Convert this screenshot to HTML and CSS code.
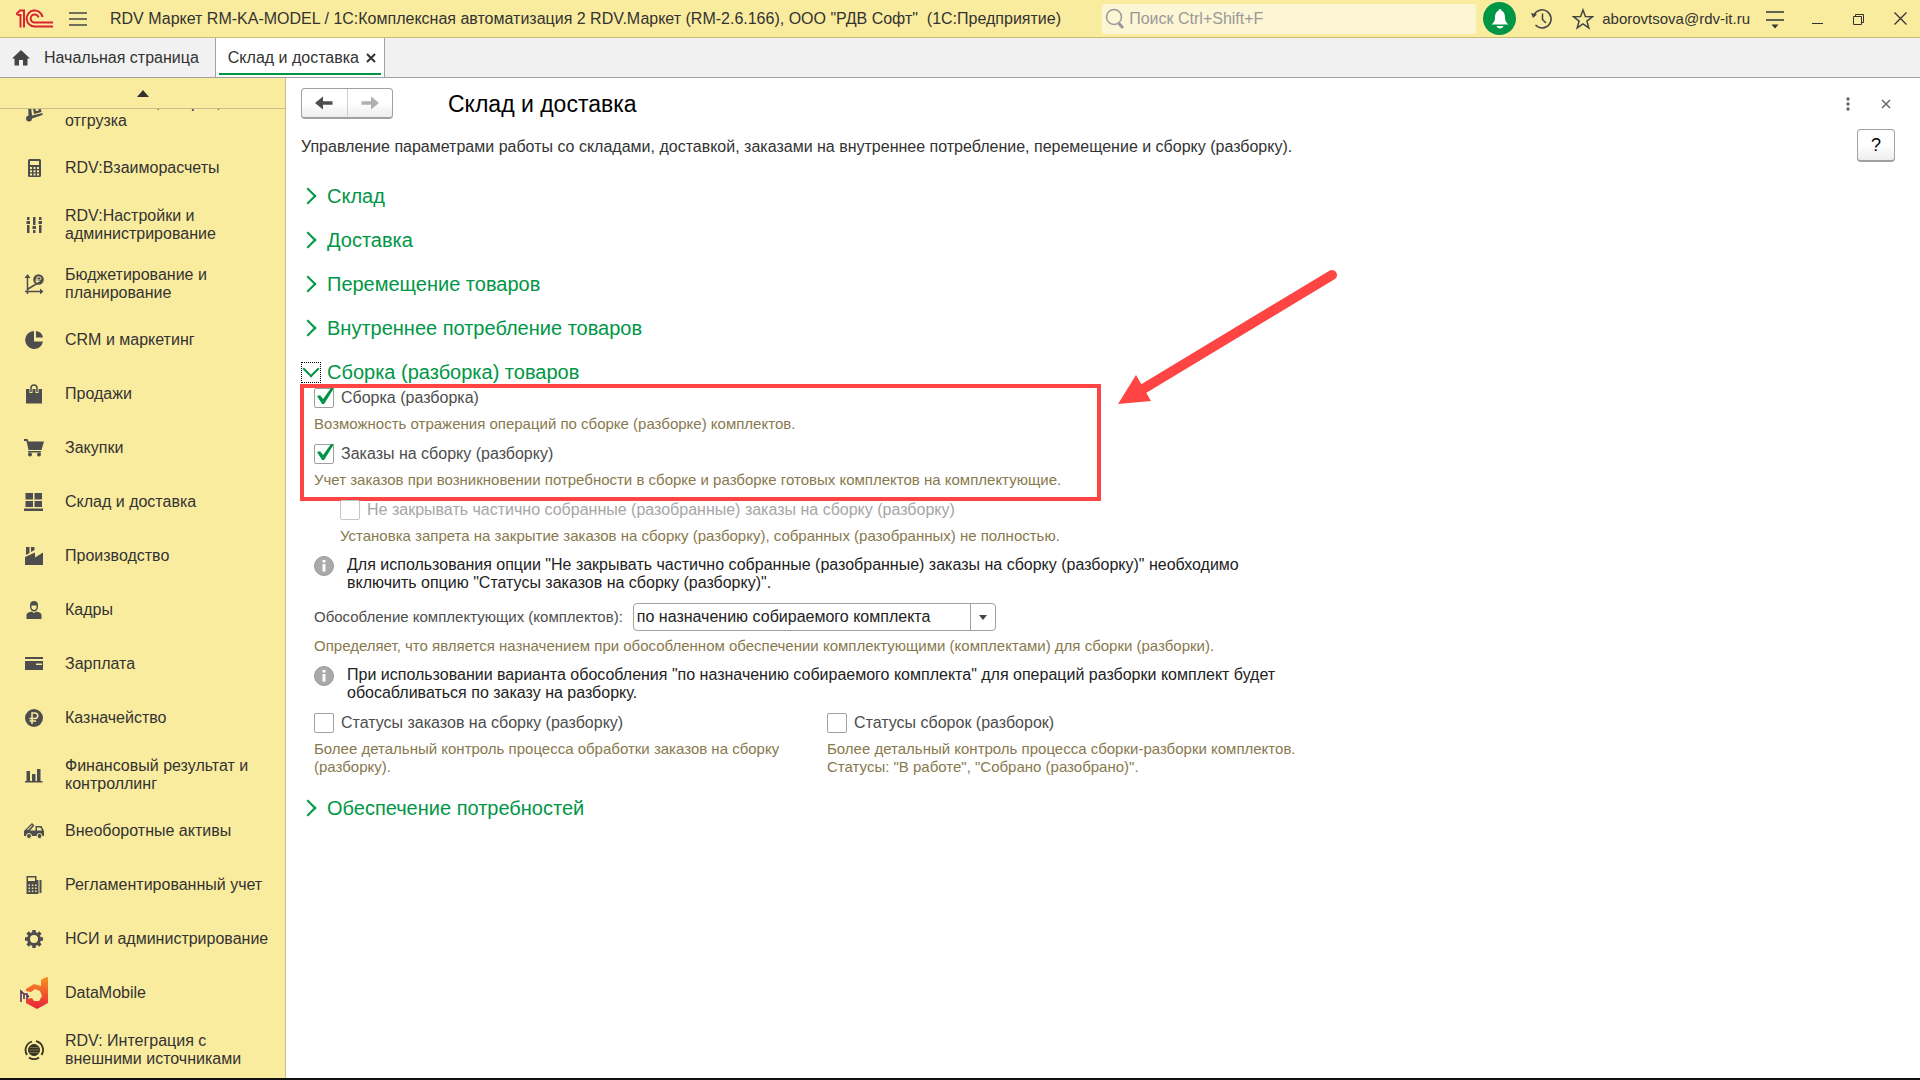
FILE: index.html
```html
<!DOCTYPE html>
<html lang="ru">

<head>
  <meta charset="UTF-8" />
  <meta name="viewport" content="width=device-width, initial-scale=1.0" />
  <title>Склад и доставка</title>
  <link rel="stylesheet" href="styles.css">
</head>

<body>
  <!-- Заголовок окна -->
  <header class="titlebar">
    <svg class="logo" width="38" height="20" viewBox="0 0 38 20" fill="none" stroke="#d9232e" stroke-width="2" aria-label="1С">
      <path d="M0 5.500L4 1.500H8V18.500M4.500 18.500V6H1.500" />
      <path d="M26.500 8A8 8 0 1 0 19 17.500H37" />
      <path d="M22.500 8.500A4 4 0 1 0 19 13.500H37" />
    </svg>
    <button class="icon-button menu-button" type="button" aria-label="Меню">
      <svg width="18" height="16" viewBox="0 0 18 16" stroke="#444" stroke-width="1.500"><path d="M0 2H18M0 8H18M0 14H18" /></svg>
    </button>
    <div class="app-title">RDV Маркет RM-KA-MODEL / 1С:Комплексная автоматизация 2 RDV.Маркет (RM-2.6.166), ООО "РДВ Софт"&nbsp; (1С:Предприятие)</div>
    <div class="search">
      <svg width="20" height="22" viewBox="0 0 20 22" fill="none" stroke="#999"><circle cx="9" cy="9" r="7.500" stroke-width="1.500" /><path d="M13.500 15L18 20" stroke-width="3" /></svg>
      <input type="search" placeholder="Поиск Ctrl+Shift+F" aria-label="Поиск" />
    </div>
    <button class="bell" type="button" aria-label="Оповещения">
      <svg width="20" height="22" viewBox="0 0 20 22" fill="#fff"><path d="M10 1C11 1 11.500 2 11.500 2.800C14.500 4 15 7 15 10C15 13 16.500 15 18.500 16.500H1.500C3.500 15 5 13 5 10C5 7 5.500 4 8.500 2.800C8.500 2 9 1 10 1ZM6.500 18H13.500C13 19.500 11.500 20.500 10 20.500S7 19.500 6.500 18Z" /></svg>
    </button>
    <button class="icon-button history" type="button" aria-label="История">
      <svg width="22" height="22" viewBox="0 0 22 22" fill="none" stroke="#444" stroke-width="1.500"><path d="M3 7A9 9 0 1 1 4.500 17M11.500 5.500V11.500L15 15" /><path d="M0 5L6 6.500L2 10Z" fill="#444" stroke="none" /></svg>
    </button>
    <button class="icon-button favorites" type="button" aria-label="Избранное">
      <svg width="22" height="22" viewBox="0 0 22 22" fill="none" stroke="#444" stroke-width="1.500"><path d="M11 2L13.400 8.600L20.400 8.800L14.900 13.100L16.800 19.900L11 15.900L5.200 19.900L7.100 13.100L1.600 8.800L8.600 8.600Z" /></svg>
    </button>
    <a class="user" href="#">aborovtsova@rdv-it.ru</a>
    <button class="icon-button" type="button" aria-label="Сервис и настройки">
      <svg width="18" height="20" viewBox="0 0 18 20" stroke="#333" stroke-width="1.500"><path d="M0 3H18M0 11H18" /><path d="M5.500 15.500H12.500L9 19.500Z" fill="#333" stroke="none" /></svg>
    </button>
    <div class="window-buttons">
      <button class="icon-button" type="button" aria-label="Свернуть">
        <svg width="12" height="12" viewBox="0 0 12 12" stroke="#333"><path d="M0 10.500H11" /></svg>
      </button>
      <button class="icon-button" type="button" aria-label="Развернуть">
        <svg width="12" height="12" viewBox="0 0 12 12" fill="none" stroke="#333"><path d="M0.500 3.500H8.500V11.500H0.500ZM2.500 3.500V1.500H10.500V9.500H8.500" /></svg>
      </button>
      <button class="icon-button" type="button" aria-label="Закрыть окно">
        <svg width="13" height="13" viewBox="0 0 13 13" stroke="#333" stroke-width="1.300"><path d="M0.500 0.500L12.500 12.500M12.500 0.500L0.500 12.500" /></svg>
      </button>
    </div>
  </header>

  <!-- Вкладки -->
  <nav class="tabs" aria-label="Открытые вкладки">
    <a class="tab" href="#">
      <svg width="18" height="16" viewBox="0 0 18 16" fill="#444"><path d="M9 0L18 8.500H15.500V15.500H11V10H7V15.500H2.500V8.500H0Z" /></svg>
      <span>Начальная страница</span>
    </a>
    <div class="tab active">
      <span>Склад и доставка</span>
      <button class="icon-button" type="button" aria-label="Закрыть вкладку">
        <svg width="10" height="10" viewBox="0 0 10 10" stroke="#333" stroke-width="2"><path d="M1 1L9 9M9 1L1 9" /></svg>
      </button>
    </div>
  </nav>

  <div class="workspace">
    <!-- Панель разделов -->
    <aside class="sidebar">
      <button class="scroll-up" type="button" aria-label="Прокрутить вверх">
        <svg width="12" height="7" viewBox="0 0 12 7" fill="#333"><path d="M6 0L12 7H0Z" /></svg>
      </button>
      <div class="section-viewport">
        <ul class="sections">
          <li><a class="section two-lines" href="#">
            <svg width="20" height="20" viewBox="0 0 20 20" fill="#4d4d4d"><path d="M4 0H6.500L8 13.500L18.500 11V13L8 16.500A3 3 0 1 1 4.500 13.500ZM8.500 3L15.500 1.500L17.500 10L10 12Z" /><path d="M11 6L14 5.200L15 8.300L12 9.200Z" fill="#faec9e" /></svg>
            <span>RDV:Заказы, сборка,<br>отгрузка</span></a></li>
          <li><a class="section" href="#">
            <svg width="20" height="20" viewBox="0 0 20 20" fill="#4d4d4d"><rect x="4" y="1" width="13" height="18" rx="1.500" /><path d="M6 3H15V7H6ZM6 9H8V11H6ZM9.500 9H11.500V11H9.500ZM13 9H15V11H13ZM6 12.200H8V14.200H6ZM9.500 12.200H11.500V14.200H9.500ZM13 12.200H15V14.200H13ZM6 15.500H8V17.500H6ZM9.500 15.500H11.500V17.500H9.500ZM13 15.500H15V17.500H13Z" fill="#faec9e" /></svg>
            <span>RDV:Взаиморасчеты</span></a></li>
          <li><a class="section two-lines" href="#">
            <svg width="20" height="20" viewBox="0 0 20 20" fill="#4d4d4d"><path d="M3 2H5.500V5H3ZM2.500 6H6V9H2.500ZM3 10H5.500V18H3ZM9 2H11.500V10H9ZM8.500 11H12V14H8.500ZM9 15H11.500V18H9ZM15 2H17.500V5H15ZM14.500 6H18V9H14.500ZM15 10H17.500V18H15Z" /></svg>
            <span>RDV:Настройки и администрирование</span></a></li>
          <li><a class="section two-lines" href="#">
            <svg width="20" height="20" viewBox="0 0 20 20" fill="none" stroke="#4d4d4d" stroke-width="1.500"><path d="M3.500 20V3M1 17.500H17M4 15L13 9.500" /><path d="M3.500 0L6.500 4H0.500ZM19.500 17.500L16 14.500V20.500Z" fill="#4d4d4d" stroke="none" /><circle cx="14.500" cy="5.500" r="5.300" fill="#4d4d4d" stroke="none" /><path d="M13 9V3H15.500A1.500 1.500 0 0 1 15.500 6H11.500M11.500 7.500H15.500" stroke="#faec9e" stroke-width="1" /></svg>
            <span>Бюджетирование и планирование</span></a></li>
          <li><a class="section" href="#">
            <svg width="20" height="20" viewBox="0 0 20 20" fill="#4d4d4d"><path d="M10 1A9 9 0 1 0 19 11.500H10ZM12 1V7.500H19A8 8 0 0 0 12 1Z" /></svg>
            <span>CRM и маркетинг</span></a></li>
          <li><a class="section" href="#">
            <svg width="20" height="20" viewBox="0 0 20 20" fill="#4d4d4d"><path d="M2 5H18V19.500H2Z" /><path d="M7 9V4A3 3 0 0 1 13 4V9" fill="none" stroke="#faec9e" stroke-width="3" /><path d="M7 8V4A3 3 0 0 1 13 4V8" fill="none" stroke="#4d4d4d" stroke-width="1.500" /></svg>
            <span>Продажи</span></a></li>
          <li><a class="section" href="#">
            <svg width="20" height="20" viewBox="0 0 20 20" fill="#4d4d4d"><path d="M0 1H3.500L4.500 3.500H20L17.500 12H4.500L2.500 3H0ZM4 13H17V14.500H4Z" /><circle cx="6" cy="16.500" r="2" /><circle cx="15" cy="16.500" r="2" /></svg>
            <span>Закупки</span></a></li>
          <li><a class="section" href="#">
            <svg width="20" height="20" viewBox="0 0 20 20" fill="#4d4d4d"><path d="M1.500 1H9V7.500H1.500ZM10.500 1H18V7.500H10.500ZM1.500 9H9V15H1.500ZM10.500 9H18V15H10.500ZM0 16.500H19V19H0Z" /></svg>
            <span>Склад и доставка</span></a></li>
          <li><a class="section" href="#">
            <svg width="20" height="20" viewBox="0 0 20 20" fill="#4d4d4d"><path d="M1 19V11L11 6.500V11.500L19 6.500V19ZM2 1H5.500V7L2 9ZM7 1H10.500V4L7 6Z" /></svg>
            <span>Производство</span></a></li>
          <li><a class="section" href="#">
            <svg width="20" height="20" viewBox="0 0 20 20" fill="#4d4d4d"><path d="M6 5C6 2.500 7.500 1 10 1S14 2.500 14 5V7C14 9.500 12 11.500 10 11.500S6 9.500 6 7ZM2.500 19V15C2.500 12.500 6 12 7.500 11.500L10 13L12.500 11.500C14 12 17.500 12.500 17.500 15V19Z" /><path d="M7.500 5.500H12.500V7.500C12.500 9 11 10 10 10S7.500 9 7.500 7.500Z" fill="#faec9e" /></svg>
            <span>Кадры</span></a></li>
          <li><a class="section" href="#">
            <svg width="20" height="20" viewBox="0 0 20 20" fill="#4d4d4d"><path d="M1 3H19V5H1ZM1 7H19V16H1Z" /><path d="M12 9.500H18V11H12Z" fill="#faec9e" /></svg>
            <span>Зарплата</span></a></li>
          <li><a class="section" href="#">
            <svg width="20" height="20" viewBox="0 0 20 20"><circle cx="10" cy="10" r="9" fill="#4d4d4d" /><path d="M8 16V5H11.500A2.800 2.800 0 0 1 11.500 10.500H5.500M5.500 13H12" fill="none" stroke="#faec9e" stroke-width="1.500" /></svg>
            <span>Казначейство</span></a></li>
          <li><a class="section two-lines" href="#">
            <svg width="20" height="20" viewBox="0 0 20 20" fill="#4d4d4d"><path d="M2.500 6H6V16H2.500ZM8 9H11.500V16H8ZM13 4H16.500V16H13ZM1 16H18.500V17.500H1Z" /></svg>
            <span>Финансовый результат и контроллинг</span></a></li>
          <li><a class="section" href="#">
            <svg width="20" height="20" viewBox="0 0 20 20" fill="#4d4d4d"><path d="M0 10L8 2L10.500 4.500L6 9.500H11.500V5H17.500L20 10V15H0Z" /><path d="M13 6.500H16.500L18 9.500H13ZM3 8.500L8 4L8.500 4.500L4 9Z" fill="#faec9e" /><g stroke="#faec9e"><circle cx="5" cy="15" r="2.500" /><circle cx="15.500" cy="15" r="2.500" /></g></svg>
            <span>Внеоборотные активы</span></a></li>
          <li><a class="section" href="#">
            <svg width="20" height="20" viewBox="0 0 20 20" fill="#4d4d4d"><path d="M2.500 1H12.500V5H14.500V19H2.500V5ZM15.500 5H17.500V18H15.500Z" /><path d="M4 2.500H11V6H4ZM4.500 9.500H6V11H4.500ZM7.800 9.500H9.300V11H7.800ZM11 9.500H12.500V11H11ZM4.500 12.500H6V14H4.500ZM7.800 12.500H9.300V14H7.800ZM11 12.500H12.500V14H11ZM4.500 15.500H6V17H4.500ZM7.800 15.500H9.300V17H7.800ZM11 15.500H12.500V17H11Z" fill="#faec9e" /></svg>
            <span>Регламентированный учет</span></a></li>
          <li><a class="section" href="#">
            <svg width="20" height="20" viewBox="0 0 20 20" fill="none" stroke="#4d4d4d"><circle cx="10" cy="10" r="5.500" stroke-width="3" /><path d="M10 1V4M10 16V19M1 10H4M16 10H19M3.600 3.600L5.800 5.800M14.200 14.200L16.400 16.400M16.400 3.600L14.200 5.800M5.800 14.200L3.600 16.400" stroke-width="3.500" /></svg>
            <span>НСИ и администрирование</span></a></li>
          <li><a class="section" href="#">
            <svg width="28" height="32" viewBox="0 0 28 32">
              <defs><linearGradient id="dm" x1="0" y1="0" x2="0" y2="1"><stop offset="0" stop-color="#f7941e" /><stop offset="1" stop-color="#e8203a" /></linearGradient></defs>
              <path d="M21 9V3L24 1L28 0V26L17 32L6 26V22L12 21L14 24H19L22 19L20 14L15 12L11 15L6 14V12L14 7Z" fill="url(#dm)" />
              <path d="M1 25V14L4 17V22M4 17L7 17V22M7 18L9 20" fill="none" stroke="#4b2a63" stroke-width="1.500" />
            </svg>
            <span>DataMobile</span></a></li>
          <li><a class="section two-lines" href="#">
            <svg width="20" height="20" viewBox="0 0 20 20" fill="none" stroke="#35331f"><circle cx="10" cy="10" r="5.500" fill="#35331f" /><path d="M3 15A9 9 0 0 1 8 1.500M12 1.200A9 9 0 0 1 17.500 15M15 17.500A9 9 0 0 1 5 17.500" stroke-width="1.800" /><path d="M5 10H15M6 7.500H14M6 12.500H14" stroke="#8b845a" stroke-width="0.800" /></svg>
            <span>RDV: Интеграция с внешними источниками</span></a></li>
        </ul>
      </div>
    </aside>

    <!-- Форма настроек -->
    <main class="page">
      <div class="page-head">
        <div class="nav-buttons">
          <button type="button" aria-label="Назад">
            <svg width="18" height="14" viewBox="0 0 18 14" fill="#4d4d4d"><path d="M0 7L8 0.500V5.200H17.500V8.800H8V13.500Z" /></svg>
          </button>
          <button type="button" aria-label="Вперед" disabled>
            <svg width="18" height="14" viewBox="0 0 18 14" fill="#b0b0b0"><path d="M18 7L10 0.500V5.200H0.500V8.800H10V13.500Z" /></svg>
          </button>
        </div>
        <h1>Склад и доставка</h1>
        <button class="icon-button" type="button" aria-label="Еще">
          <svg width="4" height="14" viewBox="0 0 4 14" fill="#666"><circle cx="2" cy="2" r="1.700" /><circle cx="2" cy="7" r="1.700" /><circle cx="2" cy="12" r="1.700" /></svg>
        </button>
        <button class="icon-button close-page" type="button" aria-label="Закрыть">
          <svg width="10" height="10" viewBox="0 0 10 10" stroke="#666" stroke-width="1.500"><path d="M1 1L9 9M9 1L1 9" /></svg>
        </button>
      </div>

      <div class="intro">
        <p>Управление параметрами работы со складами, доставкой, заказами на внутреннее потребление, перемещение и сборку (разборку).</p>
        <button class="help" type="button" aria-label="Справка">?</button>
      </div>

      <div class="groups">
        <h2><button class="group" type="button" aria-expanded="false"><span class="chevron"></span>Склад</button></h2>
        <h2><button class="group" type="button" aria-expanded="false"><span class="chevron"></span>Доставка</button></h2>
        <h2><button class="group" type="button" aria-expanded="false"><span class="chevron"></span>Перемещение товаров</button></h2>
        <h2><button class="group" type="button" aria-expanded="false"><span class="chevron"></span>Внутреннее потребление товаров</button></h2>
        <section>
          <h2><button class="group" type="button" aria-expanded="true"><span class="chevron"></span>Сборка (разборка) товаров</button></h2>
          <div class="group-body">
            <div class="highlight">
              <div class="option">
                <label><input type="checkbox" checked /> Сборка (разборка)</label>
                <p class="hint">Возможность отражения операций по сборке (разборке) комплектов.</p>
              </div>
              <div class="option">
                <label><input type="checkbox" checked /> Заказы на сборку (разборку)</label>
                <p class="hint">Учет заказов при возникновении потребности в сборке и разборке готовых комплектов на комплектующие.</p>
              </div>
              <svg class="arrow" width="220" height="136" viewBox="0 0 220 136">
                <path d="M214 6L25 120" stroke="#ff4444" stroke-width="10" stroke-linecap="round" />
                <path d="M0 135L18 106L33 132Z" fill="#ff4444" />
              </svg>
            </div>
            <div class="option nested">
              <label class="disabled"><input type="checkbox" disabled /> Не закрывать частично собранные (разобранные) заказы на сборку (разборку)</label>
              <p class="hint">Установка запрета на закрытие заказов на сборку (разборку), собранных (разобранных) не полностью.</p>
            </div>
            <div class="info">
              <svg width="20" height="20" viewBox="0 0 20 20"><circle cx="10" cy="10" r="9.500" fill="#aaa" stroke="#999" /><path d="M8.500 4H11.500V6.500H8.500ZM8.500 8H11.500V15.500H8.500Z" fill="#fff" /></svg>
              <p>Для использования опции "Не закрывать частично собранные (разобранные) заказы на сборку (разборку)" необходимо включить опцию "Статусы заказов на сборку (разборку)".</p>
            </div>
            <div class="field">
              <div class="field-row">
                <label for="separation">Обособление комплектующих (комплектов):</label>
                <div class="select">
                  <select id="separation">
                    <option>по назначению собираемого комплекта</option>
                  </select>
                </div>
              </div>
              <p class="hint">Определяет, что является назначением при обособленном обеспечении комплектующими (комплектами) для сборки (разборки).</p>
            </div>
            <div class="info">
              <svg width="20" height="20" viewBox="0 0 20 20"><circle cx="10" cy="10" r="9.500" fill="#aaa" stroke="#999" /><path d="M8.500 4H11.500V6.500H8.500ZM8.500 8H11.500V15.500H8.500Z" fill="#fff" /></svg>
              <p>При использовании варианта обособления "по назначению собираемого комплекта" для операций разборки комплект будет обосабливаться по заказу на разборку.</p>
            </div>
            <div class="columns">
              <div class="option">
                <label><input type="checkbox" /> Статусы заказов на сборку (разборку)</label>
                <p class="hint">Более детальный контроль процесса обработки заказов на сборку (разборку).</p>
              </div>
              <div class="option">
                <label><input type="checkbox" /> Статусы сборок (разборок)</label>
                <p class="hint">Более детальный контроль процесса сборки-разборки комплектов. Статусы: "В работе", "Собрано (разобрано)".</p>
              </div>
            </div>
          </div>
        </section>
        <h2><button class="group" type="button" aria-expanded="false"><span class="chevron"></span>Обеспечение потребностей</button></h2>
      </div>
    </main>
  </div>
  <footer class="taskbar"></footer>
</body>

</html>
```

FILE: styles.css
```css
/* Общие стили */
* {
  box-sizing: border-box;
}

body {
  margin: 0;
  height: 100vh;
  display: flex;
  flex-direction: column;
  overflow: hidden;
  font-family: "Liberation Sans", Arial, sans-serif;
  font-size: 16px;
  line-height: 18px;
  color: #333;
  background-color: #fff;
}

h1,
h2,
p,
ul {
  margin: 0;
  padding: 0;
  font-weight: normal;
}

ul {
  list-style: none;
}

a {
  color: inherit;
  text-decoration: none;
}

button,
input,
select {
  font: inherit;
  color: inherit;
}

button {
  padding: 0;
  border: none;
  background: none;
  cursor: pointer;
}

svg {
  display: block;
  flex: none;
}

.icon-button {
  display: flex;
  flex: none;
}

/* Заголовок окна */
.titlebar {
  display: flex;
  align-items: center;
  height: 38px;
  flex: none;
  padding: 0 13px 0 16px;
  background-color: #faec9e;
  border-bottom: 1px solid #c9bc70;
}

.menu-button {
  margin: 0 23px 0 15px;
}

.app-title {
  flex: 1;
  white-space: nowrap;
  overflow: hidden;
}

.search {
  display: flex;
  align-items: center;
  gap: 4px;
  width: 374px;
  height: 30px;
  padding-left: 3px;
  border-radius: 3px;
  background-color: #fdf6d4;
}

.search input {
  flex: 1;
  min-width: 0;
  padding: 0;
  border: none;
  outline: none;
  background: none;
}

.search input::placeholder {
  color: #999;
}

.bell {
  display: flex;
  align-items: center;
  justify-content: center;
  width: 33px;
  height: 33px;
  margin-left: 7px;
  border-radius: 50%;
  background-color: #009646;
}

.history {
  margin-left: 15px;
}

.favorites {
  margin: 0 8px 0 19px;
}

.user {
  margin-right: 16px;
  font-size: 15px;
}

.window-buttons {
  display: flex;
  align-items: center;
  gap: 29px;
  margin-left: 28px;
}

/* Вкладки */
.tabs {
  display: flex;
  height: 40px;
  flex: none;
  background-color: #f1f1f1;
  border-bottom: 1px solid #a0a0a0;
}

.tab {
  display: flex;
  align-items: center;
  gap: 14px;
  padding: 0 16px 0 12px;
}

.tab.active {
  gap: 7px;
  padding: 0 8px 0 12px;
  background: linear-gradient(#009646, #009646) center bottom 2px / calc(100% - 6px) 2px no-repeat #fff;
  border-left: 1px solid #a0a0a0;
  border-right: 1px solid #a0a0a0;
}

/* Панель разделов */
.workspace {
  display: flex;
  flex: 1;
  min-height: 0;
}

.sidebar {
  display: flex;
  flex-direction: column;
  width: 286px;
  flex: none;
  background-color: #faec9e;
  border-right: 1px solid #c9bc8a;
}

.scroll-up {
  display: flex;
  align-items: center;
  justify-content: center;
  height: 31px;
  flex: none;
  border-bottom: 1px solid #c9bc8a;
}

.section-viewport {
  flex: 1;
  min-height: 0;
  overflow: hidden;
}

/* список прокручен на несколько пикселей вниз */
.sections {
  margin-top: -27px;
}

.section {
  display: grid;
  grid-template-columns: 36px 1fr;
  align-items: center;
  justify-items: center;
  gap: 13px;
  height: 54px;
  padding: 0 16px;
}

.section.two-lines {
  height: 59px;
}

.section span {
  justify-self: start;
}

/* Форма */
.page {
  flex: 1;
  padding: 10px 25px 0 15px;
}

.page-head {
  display: flex;
  align-items: center;
  height: 31px;
  margin-bottom: 10px;
}

.nav-buttons {
  display: flex;
  width: 92px;
  height: 31px;
  border: 1px solid #a0a0a0;
  border-bottom-width: 2px;
  border-radius: 4px;
  background: linear-gradient(#fff 50%, #ededed);
}

.nav-buttons button {
  display: flex;
  align-items: center;
  justify-content: center;
  flex: 1;
}

.nav-buttons button + button {
  border-left: 1px solid #d0d0d0;
}

h1 {
  flex: 1;
  margin-left: 55px;
  font-size: 23px;
  line-height: 30px;
  color: #000;
}

.close-page {
  margin: 0 4px 0 31px;
}

.intro {
  display: flex;
  align-items: center;
  justify-content: space-between;
  margin-bottom: 20px;
}

.intro p {
  padding-top: 2px;
}

.help {
  width: 38px;
  height: 33px;
  border: 1px solid #a0a0a0;
  border-bottom-width: 2px;
  border-radius: 4px;
  background: linear-gradient(#fff 50%, #ededed);
  font-size: 18px;
  color: #000;
}

/* Группы настроек */
.groups {
  display: flex;
  flex-direction: column;
  gap: 16px;
}

h2 {
  display: flex;
}

.group {
  display: flex;
  align-items: center;
  gap: 6px;
  height: 28px;
  font-size: 20px;
  color: #009646;
}

.chevron {
  display: flex;
  align-items: center;
  justify-content: center;
  width: 20px;
  height: 21px;
}

.chevron::before {
  content: "";
  width: 10px;
  height: 10px;
  margin-right: 6px;
  border: solid #009646;
  border-width: 2px 2px 0 0;
  transform: rotate(45deg);
}

.group[aria-expanded="true"] .chevron {
  border: 1px dotted #000;
}

.group[aria-expanded="true"] .chevron::before {
  margin: 0 0 6px;
  transform: rotate(135deg);
}

.group-body {
  display: flex;
  flex-direction: column;
  align-items: flex-start;
  gap: 11px;
  padding: 2px 0 2px 13px;
}

/* Красная рамка со стрелкой */
.highlight {
  position: relative;
  display: flex;
  flex-direction: column;
  gap: 11px;
  min-width: 773px;
}

.highlight::after {
  content: "";
  position: absolute;
  inset: -4px -14px -12px;
  border: 4px solid #ff4444;
  pointer-events: none;
}

.arrow {
  position: absolute;
  left: calc(100% + 31px);
  bottom: 84px;
}

.option label {
  display: flex;
  align-items: center;
  gap: 7px;
  color: #4d4d4d;
}

.option label.disabled {
  color: #a6a6a6;
}

.nested {
  margin-left: 26px;
}

.hint {
  margin-top: 7px;
  font-size: 15px;
  color: #87794e;
}

input[type="checkbox"] {
  appearance: none;
  position: relative;
  width: 20px;
  height: 20px;
  flex: none;
  margin: 0;
  border: 1px solid #a0a0a0;
  border-radius: 2px;
  background-color: #fff;
}

input[type="checkbox"]:disabled {
  border-color: #c6c6c6;
}

input[type="checkbox"]:checked::after {
  content: "";
  position: absolute;
  left: 2px;
  top: -1px;
  width: 17px;
  height: 16px;
  background-color: #009646;
  clip-path: polygon(0 50%, 18% 46%, 36% 68%, 82% 0, 100% 0, 42% 100%, 30% 100%);
}

.info {
  display: flex;
  align-items: flex-start;
  gap: 13px;
  color: #222;
}

.info p {
  max-width: 936px;
}

.field-row {
  display: flex;
  align-items: center;
  gap: 10px;
  font-size: 15px;
  color: #4d4d4d;
}

.field .hint {
  margin-top: 6px;
}

.select {
  position: relative;
  width: 363px;
  font-size: 16px;
}

.select select {
  display: block;
  appearance: none;
  width: 100%;
  height: 28px;
  padding: 0 30px 0 3px;
  border: 1px solid #a0a0a0;
  border-radius: 4px;
  background-color: #fff;
  color: #222;
}

.select::before {
  content: "";
  position: absolute;
  top: 1px;
  bottom: 1px;
  right: 25px;
  border-left: 1px solid #a0a0a0;
}

.select::after {
  content: "";
  position: absolute;
  top: 12px;
  right: 9px;
  border: 4px solid transparent;
  border-top: 5px solid #444;
  pointer-events: none;
}

.columns {
  display: grid;
  grid-template-columns: 488px 512px;
  gap: 25px;
}

/* Край панели задач */
.taskbar {
  height: 2px;
  flex: none;
  background-color: #111;
}
```
